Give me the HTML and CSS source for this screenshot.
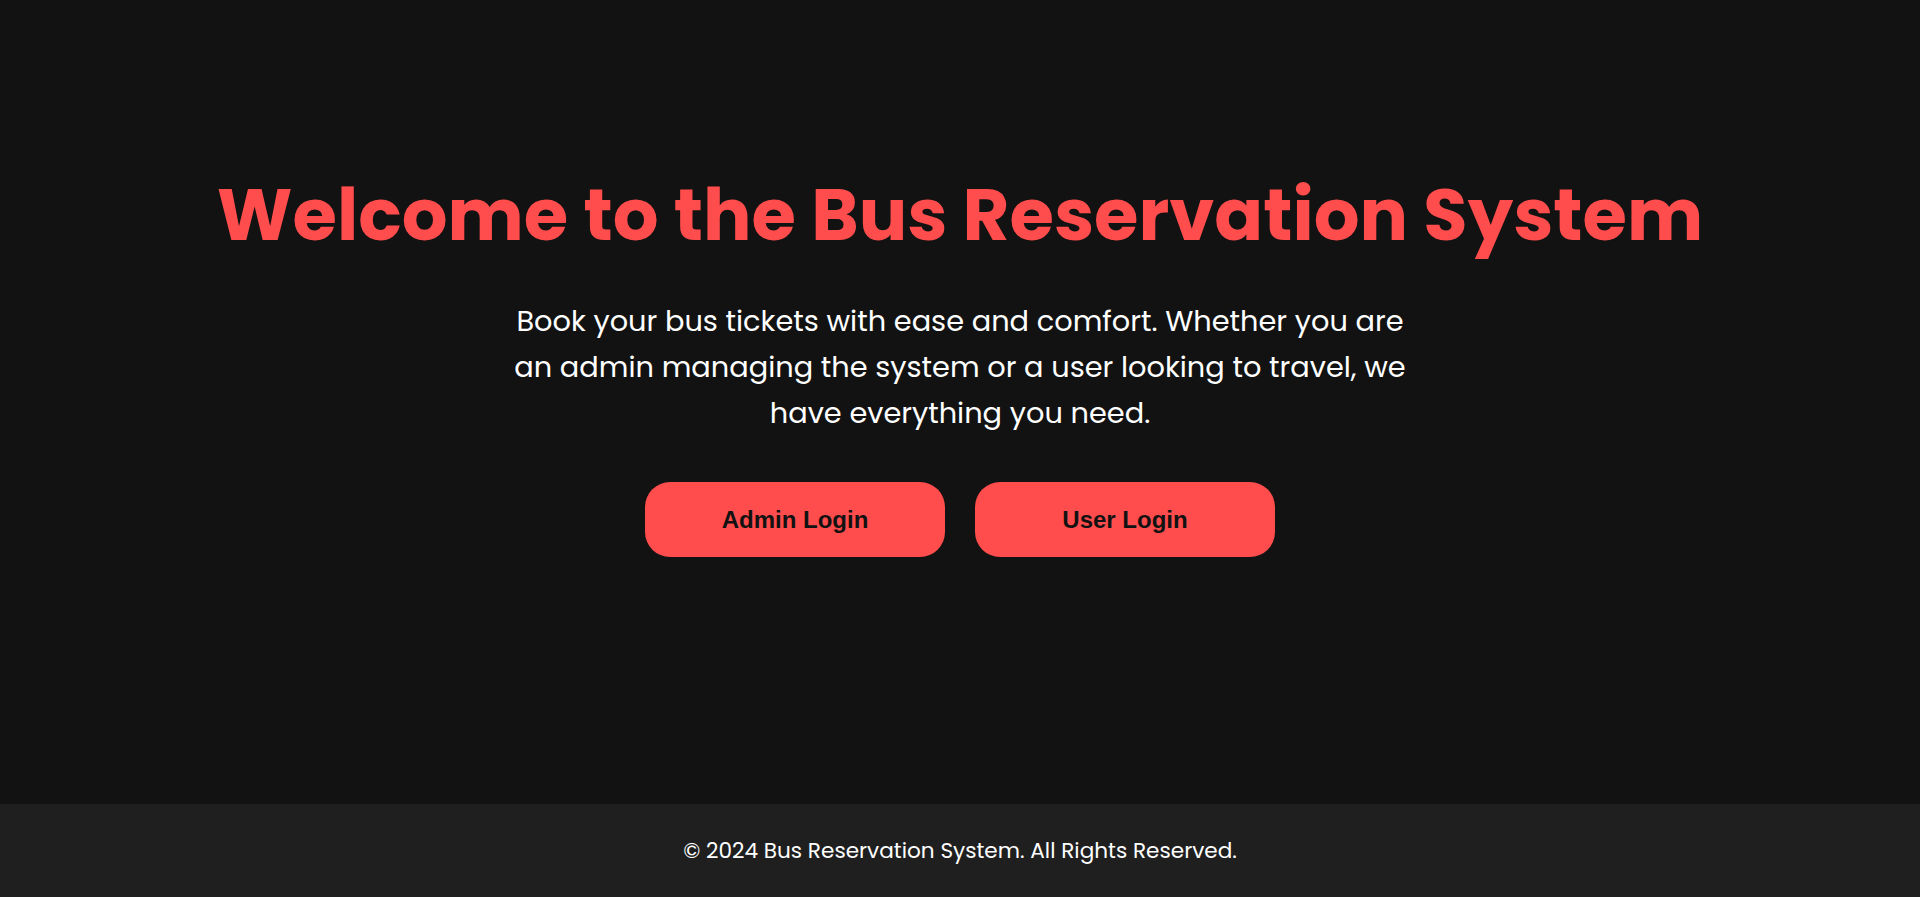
FILE: index.html
```html
<!DOCTYPE html>
<html lang="en">
<head>
<meta charset="UTF-8">
<title>Bus Reservation System</title>
<link rel="stylesheet" href="styles.css">
</head>
<body>
  <main class="hero">
    <h1 class="hero-title">Welcome to the Bus Reservation System</h1>
    <p class="hero-text">Book your bus tickets with ease and comfort. Whether you are an admin managing the system or a user looking to travel, we have everything you need.</p>
    <div class="hero-actions">
      <a class="btn" href="#">Admin Login</a>
      <a class="btn" href="#">User Login</a>
    </div>
  </main>
  <footer class="site-footer">
    <p>© 2024 Bus Reservation System. All Rights Reserved.</p>
  </footer>
</body>
</html>
```

FILE: styles.css
```css
* { box-sizing: border-box; }

html, body {
  margin: 0;
  padding: 0;
  height: 100%;
}

body {
  background: #121212;
  color: #ffffff;
  font-family: "Poppins", "Open Sans", "Noto Sans", sans-serif;
  display: flex;
  flex-direction: column;
  min-height: 100vh;
}

.hero {
  flex: 1;
  display: flex;
  flex-direction: column;
  align-items: center;
  justify-content: center;
  text-align: center;
  padding: 0 20px 75px;
}

.hero-title {
  margin: 0 0 40px;
  color: #ff4c4c;
  font-size: 72px;
  font-weight: 700;
  line-height: 1.2;
}

.hero-text {
  margin: 0 0 46px;
  max-width: 900px;
  font-size: 28.8px;
  line-height: 1.6;
}

.hero-actions {
  display: flex;
  gap: 30px;
}

.btn {
  display: block;
  width: 300px;
  padding: 24px 0;
  border-radius: 25px;
  background: #ff4c4c;
  color: #121212;
  font-family: "Liberation Sans", Arial, sans-serif;
  font-weight: 700;
  font-size: 24px;
  line-height: 27px;
  text-align: center;
  text-decoration: none;
}

.site-footer {
  background: #1f1f1f;
  height: 93px;
  display: flex;
  align-items: center;
  justify-content: center;
}

.site-footer p {
  margin: 0;
  font-size: 21.6px;
}
```
